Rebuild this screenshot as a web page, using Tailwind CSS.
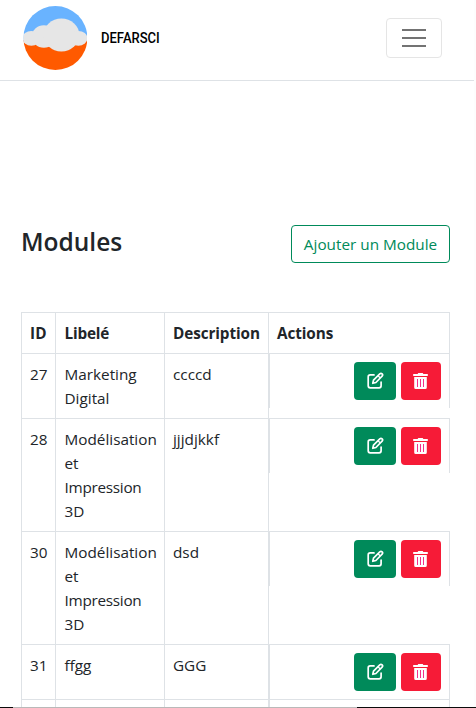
<!DOCTYPE html>
<html lang="fr">
<head>
<meta charset="utf-8">
<title>Modules</title>
<script src="https://cdn.jsdelivr.net/npm/@tailwindcss/browser@4"></script>
</head>
<body class="bg-[#fdfdfd]">
<svg class="hidden">
  <symbol id="edit" viewBox="0 0 17 17"><path d="M7 2.900H3.200Q1.200 2.900 1.200 4.900v8.900q0 2 2 2h8.900q2 0 2-2V10" fill="none" stroke="#fff" stroke-width="1.700" stroke-linecap="round"/><path d="M5.800 11.300l.7-3.100 6.300-6.300q1.200-1.100 2.300 0t0 2.300L8.900 10.500z" fill="none" stroke="#fff" stroke-width="1.700" stroke-linejoin="round"/><path d="M11 3.700l2.300 2.300" stroke="#fff" stroke-width="1.300"/></symbol>
  <symbol id="trash" viewBox="0 0 15 16"><path d="M.2 1.100h4.400L5.300 0h4.400l.7 1.100h4.400v1.900H.2zM1.200 4h12.600v10.500q0 1.500-1.500 1.500H2.700q-1.500 0-1.500-1.500z" fill="#fff"/><path d="M4.500 6v8M7.500 6v8M10.500 6v8" stroke="#f4308a" stroke-width="1"/></symbol>
</svg>
<div class="flex h-[708px] w-[476px] flex-col overflow-hidden font-['Open_Sans',sans-serif] text-[15.3px] leading-6 text-[#212529]">
  <div class="flex h-[707px] w-[474px] shrink-0 flex-col overflow-hidden bg-white">
    <header class="flex h-[81px] shrink-0 items-start border-b border-[#dee2e6] pl-[23px] pr-8">
      <svg class="mt-1.5 h-16 w-16" viewBox="-.4 0 64 64">
        <defs><clipPath id="disc"><circle cx="32" cy="32" r="32"/></clipPath></defs>
        <g clip-path="url(#disc)"><path d="M0 0h64v36H0z" fill="#69b3ff"/><path d="M0 34h64v30H0z" fill="#ff5a00"/>
        <g fill="#e6e6e6"><ellipse cx="8" cy="32.300" rx="9" ry="7.400"/><ellipse cx="20.500" cy="30.500" rx="12" ry="11.300"/><ellipse cx="38" cy="29" rx="18" ry="16.400"/><ellipse cx="55" cy="32.300" rx="9" ry="7.400"/></g></g>
      </svg>
      <span id="brand" class="ml-[14px] mt-[26px] w-[60px] origin-left scale-x-[.84] whitespace-nowrap font-[Roboto] text-[15.500px] font-medium text-black">DEFARSCI</span>
      <button aria-label="Menu" class="ml-auto mt-[18px] flex h-10 w-14 flex-col items-center justify-center gap-[6px] rounded-[4px] border border-[#e5e5e5]"><i class="h-0.5 w-6 bg-[#737373]"></i><i class="h-0.5 w-6 bg-[#737373]"></i><i class="h-0.5 w-6 bg-[#737373]"></i></button>
    </header>
    <main class="flex flex-col pl-[21px] pt-36">
      <div class="flex h-[38px] w-[429px] items-start justify-between">
        <h1 class="whitespace-nowrap pt-0.5 text-[24.500px] font-semibold leading-[30px]">Modules</h1>
        <button class="h-[38px] w-[159px] whitespace-nowrap rounded-[4px] border border-[#008a5a] text-[#008a5a]">Ajouter un Module</button>
      </div>
      <div id="table" class="mt-[49px] grid w-[429px] grid-cols-[34px_109px_104px_182px] grid-rows-[41px_65px_113px_113px_55px_9px] whitespace-nowrap">
        <div class="border-l border-t border-[#dee2e6] pl-2 pt-2 font-bold tracking-[.3px]">ID</div>
        <div class="border-l border-t border-[#dee2e6] pl-[8.500px] pt-2 font-bold tracking-[-.2px]">Libelé</div>
        <div class="border-l border-t border-[#dee2e6] pl-2 pt-2 font-bold tracking-[-.1px]">Description</div>
        <div class="border-x border-t border-[#dee2e6] pl-2 pt-2 font-bold tracking-[-.1px]">Actions</div>

        <div class="border-l border-t border-[#dee2e6] pl-2 pt-2">27</div>
        <div class="border-l border-t border-[#dee2e6] pl-[8.500px] pt-2">Marketing<br>Digital</div>
        <div class="border-l border-t border-[#dee2e6] pl-2 pt-2">ccccd</div>
        <div class="border-l border-t border-[#dee2e6]"><div class="flex h-[54px] justify-end gap-[5px] border-x border-[#dee2e6] pr-2 pt-2"><button class="flex h-[38px] w-[42px] items-center justify-center rounded-[4px] bg-[#008a5a] pb-px"><svg class="h-[17px] w-[17px]"><use href="#edit"/></svg></button><button class="flex h-[38px] w-10 items-center justify-center rounded-[4px] bg-[#f61b37] pr-px"><svg class="h-4 w-[15px]"><use href="#trash"/></svg></button></div></div>

        <div class="border-l border-t border-[#dee2e6] pl-2 pt-2">28</div>
        <div class="border-l border-t border-[#dee2e6] pl-[8.500px] pt-2">Modélisation<br>et<br><span class="tracking-[-.27px]">Impression</span><br>3D</div>
        <div class="border-l border-t border-[#dee2e6] pl-2 pt-2">jjjdjkkf</div>
        <div class="border-l border-t border-[#dee2e6]"><div class="flex h-[54px] justify-end gap-[5px] border-x border-[#dee2e6] pr-2 pt-2"><button class="flex h-[38px] w-[42px] items-center justify-center rounded-[4px] bg-[#008a5a] pb-px"><svg class="h-[17px] w-[17px]"><use href="#edit"/></svg></button><button class="flex h-[38px] w-10 items-center justify-center rounded-[4px] bg-[#f61b37] pr-px"><svg class="h-4 w-[15px]"><use href="#trash"/></svg></button></div></div>

        <div class="border-l border-t border-[#dee2e6] pl-2 pt-2">30</div>
        <div class="border-l border-t border-[#dee2e6] pl-[8.500px] pt-2">Modélisation<br>et<br><span class="tracking-[-.27px]">Impression</span><br>3D</div>
        <div class="border-l border-t border-[#dee2e6] pl-2 pt-2">dsd</div>
        <div class="border-l border-t border-[#dee2e6]"><div class="flex h-[54px] justify-end gap-[5px] border-x border-[#dee2e6] pr-2 pt-2"><button class="flex h-[38px] w-[42px] items-center justify-center rounded-[4px] bg-[#008a5a] pb-px"><svg class="h-[17px] w-[17px]"><use href="#edit"/></svg></button><button class="flex h-[38px] w-10 items-center justify-center rounded-[4px] bg-[#f61b37] pr-px"><svg class="h-4 w-[15px]"><use href="#trash"/></svg></button></div></div>

        <div class="border-l border-t border-[#dee2e6] pl-2 pt-2">31</div>
        <div class="border-l border-t border-[#dee2e6] pl-[8.500px] pt-2">ffgg</div>
        <div class="border-l border-t border-[#dee2e6] pl-2 pt-2">GGG</div>
        <div class="border-l border-t border-[#dee2e6]"><div class="flex h-[54px] justify-end gap-[5px] border-x border-[#dee2e6] pr-2 pt-2"><button class="flex h-[38px] w-[42px] items-center justify-center rounded-[4px] bg-[#008a5a] pb-px"><svg class="h-[17px] w-[17px]"><use href="#edit"/></svg></button><button class="flex h-[38px] w-10 items-center justify-center rounded-[4px] bg-[#f61b37] pr-px"><svg class="h-4 w-[15px]"><use href="#trash"/></svg></button></div></div>

        <div class="border-l border-t border-[#dee2e6]"></div>
        <div class="border-l border-t border-[#dee2e6]"></div>
        <div class="border-l border-t border-[#dee2e6]"></div>
        <div class="border-l border-t border-[#dee2e6]"><div class="h-full border-x border-[#dee2e6]"></div></div>
      </div>
    </main>
  </div>
  <div class="flex h-px bg-[#0b0b0b]"><div class="ml-[13px] w-[344px] bg-[#b9b9b9]"></div></div>
</div>
</body>
</html>
